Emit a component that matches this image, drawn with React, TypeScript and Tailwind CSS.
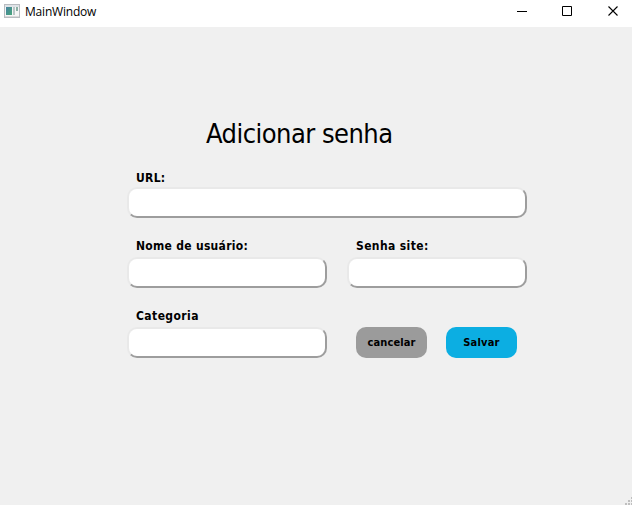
import React from "react";

const label =
  "block pl-[9px] font-['DejaVu_Sans_Condensed','DejaVu_Sans',sans-serif] text-[12px] leading-[17px] font-bold whitespace-nowrap";

function Field({ name, id, width, spacing }: { name: string; id: string; width: string; spacing: string }) {
  return (
    <div className={`flex flex-col ${width}`}>
      <label htmlFor={id} className={`${label} ${spacing}`}>{name}</label>
      <input
        id={id}
        className="h-[31px] w-full rounded-[10px] border-2 border-t-[#e9e9e9] border-r-[#9d9d9d] border-b-[#9d9d9d] border-l-[#e9e9e9] bg-white px-2 text-xs outline-none"
      />
    </div>
  );
}

function TitleBar() {
  return (
    <header className="flex h-[27px] items-start bg-white">
      <svg className="mt-[4px] ml-[4px] shrink-0" width="16" height="14" viewBox="0 0 16 14" shapeRendering="crispEdges">
        <defs>
          <linearGradient id="pane" x1="0" y1="0" x2="1" y2="1">
            <stop offset="0" stopColor="#4682a0" />
            <stop offset="1" stopColor="#48a67a" />
          </linearGradient>
        </defs>
        <rect x=".5" y=".5" width="15" height="13" fill="#f5f5f5" stroke="#b8bcc0" />
        <rect x="1" y="1" width="14" height="2" fill="#dfe3e7" />
        <rect x="2" y="3" width="6" height="8" fill="url(#pane)" />
        <rect x="9" y="3" width="2" height="8" fill="#b9c6c6" />
        <rect x="12" y="3" width="2" height="4" fill="#8bb0a4" />
        <rect x="1" y="12" width="14" height="1" fill="#dadada" />
      </svg>
      <span className="mt-[4px] ml-[5px] font-['Open_Sans',sans-serif] text-[12px] leading-4 tracking-[-0.2px]">MainWindow</span>
      <svg className="mt-[5px] mr-[13px] ml-auto" width="102" height="12" viewBox="0 0 102 12" fill="none" stroke="#000">
        <path d="M0 6.5h10" />
        <path d="M45.5 1.5h9v9h-9z" />
        <path d="M91.5 1.5l9 9M100.5 1.5l-9 9" strokeWidth="1.1" />
      </svg>
    </header>
  );
}

export default function App() {
  return (
    <div className="flex h-[505px] w-[632px] flex-col overflow-hidden bg-[#f0f0f0] text-black">
      <TitleBar />
      <main className="flex flex-1 flex-col pt-[89px] pl-[127px]">
        <h1 className="h-[54px] pl-[79px] font-['DejaVu_Sans_Condensed','DejaVu_Sans',sans-serif] text-[27px] leading-[36px] tracking-[-0.53px] whitespace-nowrap">
          Adicionar senha
        </h1>
        <Field name="URL:" id="url" width="w-[400px]" spacing="h-[17px] tracking-[0.3px]" />
        <div className="mt-[20px] flex gap-5">
          <Field name="Nome de usuário:" id="usuario" width="w-[200px]" spacing="h-[19px] tracking-[0.29px]" />
          <Field name="Senha site:" id="senha" width="w-[180px]" spacing="h-[19px] tracking-[0.38px]" />
        </div>
        <div className="mt-[20px] flex items-end">
          <Field name="Categoria" id="categoria" width="w-[200px]" spacing="h-[19px] tracking-[0.42px]" />
          <button className="ml-[29px] h-[31px] w-[71px] rounded-[10px] bg-[#9b9b9b] pt-[2px] font-['DejaVu_Sans_Condensed','DejaVu_Sans',sans-serif] text-[11px] font-bold tracking-[0.12px]">
            cancelar
          </button>
          <button className="ml-[19px] h-[31px] w-[71px] rounded-[10px] bg-[#0caee2] pt-[2px] font-['DejaVu_Sans_Condensed','DejaVu_Sans',sans-serif] text-[11px] font-bold tracking-[0.2px]">
            Salvar
          </button>
        </div>
        <svg className="mt-auto ml-auto" width="7" height="8" viewBox="0 0 7 8" fill="#bfbfbf" shapeRendering="crispEdges">
          <path d="M6 0h1v2h-1zM3 3h2v2h-2zM6 3h1v2h-1zM0 6h2v2h-2zM3 6h2v2h-2zM6 6h1v2h-1z" />
        </svg>
      </main>
    </div>
  );
}
